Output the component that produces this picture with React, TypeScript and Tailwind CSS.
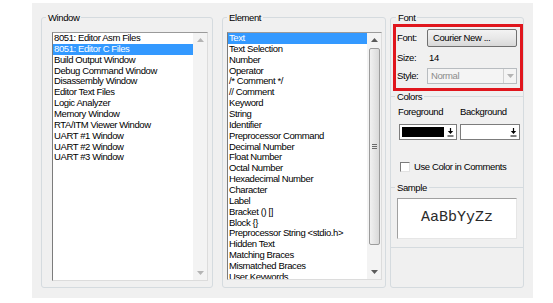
import React from "react"

const windowItems = [
  "8051: Editor Asm Files",
  "8051: Editor C Files",
  "Build Output Window",
  "Debug Command Window",
  "Disassembly Window",
  "Editor Text Files",
  "Logic Analyzer",
  "Memory Window",
  "RTA/ITM Viewer Window",
  "UART #1 Window",
  "UART #2 Window",
  "UART #3 Window",
]

const elementItems = [
  "Text",
  "Text Selection",
  "Number",
  "Operator",
  "/* Comment */",
  "// Comment",
  "Keyword",
  "String",
  "Identifier",
  "Preprocessor Command",
  "Decimal Number",
  "Float Number",
  "Octal Number",
  "Hexadecimal Number",
  "Character",
  "Label",
  "Bracket () []",
  "Block {}",
  "Preprocessor String <stdio.h>",
  "Hidden Text",
  "Matching Braces",
  "Mismatched Braces",
  "User Keywords",
]

const uiFont = "font-['Liberation_Sans',Arial,sans-serif] text-[9.5px] tracking-[-0.4px]"

function Arrow({ up, disabled }: { up?: boolean; disabled?: boolean }) {
  return (
    <svg width="7" height="4" viewBox="0 0 7 4">
      <path
        d={up ? "M0 4L3.5 0L7 4z" : "M0 0L3.5 4L7 0z"}
        fill={disabled ? "#b4b4b4" : "#5a5a5a"}
      />
    </svg>
  )
}

function ScrollBar({ thumb }: { thumb?: boolean }) {
  return (
    <div className="w-[14px] h-full flex flex-col bg-[#f3f3f3] shrink-0">
      <div className="h-[14px] flex items-center justify-center">
        <Arrow up disabled={!thumb} />
      </div>
      <div className="flex-1 px-[1px] pt-[1px] pb-[20px]">
        {thumb && (
          <div className="h-[197px] ml-[1px] border border-[#9c9c9c] rounded-[2px] bg-gradient-to-r from-[#f1f1f1] to-[#d9d9d9] flex items-center justify-center">
            <div className="flex flex-col gap-[1px] w-[5px]">
              <div className="h-[1px] bg-[#6a6a6a]" />
              <div className="h-[1px] bg-[#6a6a6a]" />
              <div className="h-[1px] bg-[#6a6a6a]" />
            </div>
          </div>
        )}
      </div>
      <div className="h-[14px] flex items-center justify-center">
        <Arrow disabled={!thumb} />
      </div>
    </div>
  )
}

function ListBox({ items, selected, size, thumb }: { items: string[]; selected: number; size: string; thumb?: boolean }) {
  return (
    <div className={`${size} mt-[9px] flex bg-white border-l border-t border-l-[#7c7c7c] border-t-[#9a9a9a] border-r border-b border-r-[#dcdcdc] border-b-[#dcdcdc] overflow-hidden`}>
      <div className={`flex-1 overflow-hidden ${uiFont}`}>
        {items.map((item, i) => (
          <div
            key={item}
            className={`h-[10.86px] leading-[10.86px] pl-[1px] whitespace-nowrap ${
              i === selected ? "bg-[#3399ff] text-white" : "text-black"
            }`}
          >
            {item}
          </div>
        ))}
      </div>
      <ScrollBar thumb={thumb} />
    </div>
  )
}

function DropGlyph() {
  return (
    <svg width="7" height="9" viewBox="0 0 7 9">
      <path d="M3.5 0v3" stroke="#000" strokeWidth="1.2" />
      <path d="M0.8 3h5.4L3.5 6z" fill="#000" />
      <path d="M0.5 8h6" stroke="#000" strokeWidth="1" />
    </svg>
  )
}

export default function App() {
  return (
    <div className="w-[553px] h-[303px] bg-white pt-[3px] pl-[32px]">
      <div className={`w-[501px] h-[295px] bg-[#f0f0f0] pl-[9px] pt-[9px] flex items-start ${uiFont}`}>
        {/* Window group */}
        <fieldset className="w-[172px] h-[276px] border border-[#d5dbdf] rounded-[3px]">
          <legend className="ml-[4px] px-[2px] leading-[11px] text-black">Window</legend>
          <div className="pl-[10px]">
            <ListBox items={windowItems} selected={1} size="w-[156px] h-[249px]" />
          </div>
        </fieldset>

        {/* Element group */}
        <fieldset className="ml-[9px] w-[164px] h-[276px] border border-[#d5dbdf] rounded-[3px]">
          <legend className="ml-[4px] px-[2px] leading-[11px] text-black">Element</legend>
          <div className="pl-[4px]">
            <ListBox items={elementItems} selected={0} size="w-[155px] h-[248px]" thumb />
          </div>
        </fieldset>

        {/* Font / Colors / Sample */}
        <fieldset className="relative ml-[4px] w-[134px] h-[276px] border border-[#d5dbdf] rounded-[3px]">
          <legend className="ml-[5px] px-[2px] leading-[11px] text-black">Font</legend>

          <div className="pl-[6px] pr-[4px]">
            <div className="mt-[6px] h-[18px] flex items-center">
              <span className="w-[30px]">Font:</span>
              <div className="w-[90px] h-[18px] border border-[#707070] rounded-[2px] bg-gradient-to-b from-[#f3f3f3] via-[#e8e8e8] to-[#d8d8d8] flex items-center pl-[5px] text-black">
                Courier New ...
              </div>
            </div>
            <div className="mt-[3px] h-[16px] flex items-center">
              <span className="w-[32px]">Size:</span>
              <span>14</span>
            </div>
            <div className="mt-[2px] h-[16px] flex items-center">
              <span className="w-[30px]">Style:</span>
              <div className="w-[90px] h-[16px] border border-[#b8bcc0] bg-[#f4f4f4] flex items-center">
                <span className="flex-1 pl-[3px] text-[#8c8c8c]">Normal</span>
                <div className="w-[13px] h-[14px] border-l border-[#d0d0d0] flex items-center justify-center">
                  <Arrow disabled />
                </div>
              </div>
            </div>
          </div>

          <fieldset className="mt-[7px] border-t border-[#d5dbdf]">
            <legend className="ml-[4px] px-[2px] leading-[11px] text-black">Colors</legend>
            <div className="mt-[4px] h-[12px] flex items-center pl-[7px]">
              <span className="w-[62px]">Foreground</span>
              <span>Background</span>
            </div>
            <div className="mt-[6px] h-[16px] flex pl-[8px] gap-[3px]">
              <div className="w-[58px] h-[16px] bg-white border border-[#7c7c7c] flex items-center pl-[2px]">
                <div className="w-[42px] h-[10px] bg-black" />
                <div className="flex-1 flex justify-center">
                  <DropGlyph />
                </div>
              </div>
              <div className="w-[60px] h-[16px] bg-white border border-[#7c7c7c] flex items-center pl-[2px]">
                <div className="w-[44px] h-[10px] bg-white" />
                <div className="flex-1 flex justify-center">
                  <DropGlyph />
                </div>
              </div>
            </div>
            <div className="mt-[21px] h-[12px] flex items-center pl-[9px]">
              <div className="w-[10px] h-[10px] bg-white border-l border-t border-[#7a7a7a] border-r border-b border-r-[#e2e2e2] border-b-[#e2e2e2]" />
              <span className="ml-[4px]">Use Color in Comments</span>
            </div>
          </fieldset>

          <fieldset className="mt-[9px] border-t border-b border-[#d5dbdf] pb-[8px]">
            <legend className="ml-[4px] px-[2px] leading-[11px] text-black">Sample</legend>
            <div className="mt-[5px] ml-[6px] w-[120px] h-[41px] bg-white border-l border-t border-[#a0a0a0] border-r border-b border-r-[#e6e6e6] border-b-[#e6e6e6] flex items-center justify-center">
              <span className="font-['Liberation_Mono','Courier_New',monospace] text-[15px] tracking-normal text-[#2a2a2a]">
                AaBbYyZz
              </span>
            </div>
          </fieldset>

          {/* red highlight annotation */}
          <div className="absolute left-[2px] top-[1px] w-[130px] h-[67px] border-[3px] border-[#e0161d] pointer-events-none" />
        </fieldset>
      </div>
    </div>
  )
}
